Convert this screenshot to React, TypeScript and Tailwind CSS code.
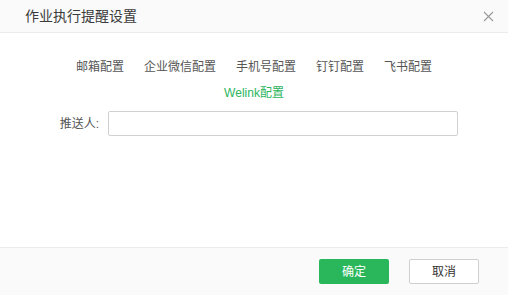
import React from "react";

export default function App() {
  const tabs = ["邮箱配置", "企业微信配置", "手机号配置", "钉钉配置", "飞书配置"];
  return (
    <div
      className="w-[508px] h-[295px] bg-white flex flex-col overflow-hidden"
      style={{ fontFamily: '"Liberation Sans", "Noto Sans CJK SC", sans-serif' }}
    >
      <div className="h-[33px] shrink-0 bg-[#fafafa] border-b border-[#ebebeb] flex items-center justify-between pl-[25px] pr-[12px]">
        <span className="text-[14px] text-[#3a3a3a] leading-none">作业执行提醒设置</span>
        <svg width="11" height="11" viewBox="0 0 11 11" className="mr-[2px]">
          <path d="M1 1L10 10M10 1L1 10" stroke="#999" strokeWidth="1.1" />
        </svg>
      </div>
      <div className="flex-1 flex flex-col">
        <div className="flex justify-center gap-[20px] mt-[26px] text-[12px] text-[#555] leading-[16px]">
          {tabs.map((t) => (
            <span key={t}>{t}</span>
          ))}
        </div>
        <div className="flex justify-center mt-[10px] text-[12px] text-[#2bb55d] leading-[16px]">
          Welink配置
        </div>
        <div className="flex items-center mt-[10px]">
          <span className="w-[100px] text-right text-[12px] text-[#555] pr-[1px]">推送人:</span>
          <div className="ml-[8px] w-[350px] h-[25px] border border-[#d0d0d0] rounded-[2px]" />
        </div>
      </div>
      <div className="h-[48px] shrink-0 bg-[#fafafa] border-t border-[#ebebeb] flex items-center justify-end pr-[29px] gap-[20px]">
        <button className="w-[70px] h-[25px] bg-[#2ab75b] rounded-[2px] text-white text-[12px] leading-none">确定</button>
        <button className="w-[70px] h-[25px] bg-white border border-[#cfcfcf] rounded-[2px] text-[#333] text-[12px] leading-none">取消</button>
      </div>
    </div>
  );
}
